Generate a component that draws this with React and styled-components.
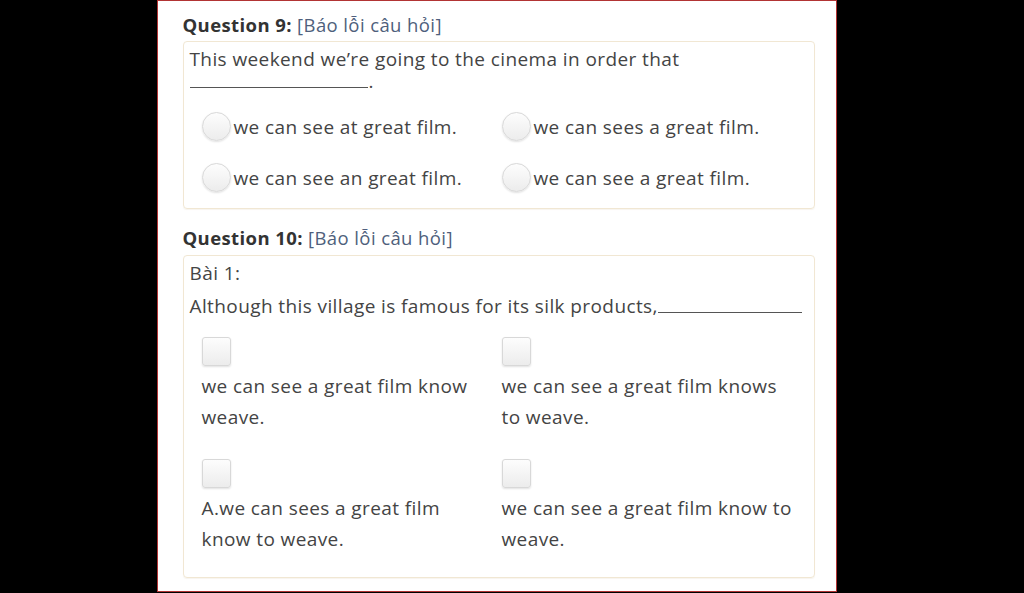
import React from 'react';
import styled, { createGlobalStyle } from 'styled-components';

const GlobalStyle = createGlobalStyle`
  html, body {
    margin: 0;
    padding: 0;
    background: #000;
  }
  body {
    font-family: "Open Sans", Lato, sans-serif;
    color: #444;
  }
`;

const Page = styled.div`
  width: 1024px;
  height: 593px;
  display: flex;
  padding-left: 157px;
  box-sizing: border-box;
  overflow: hidden;
`;

const Panel = styled.div`
  box-sizing: border-box;
  width: 680px;
  height: 592px;
  background: #fff;
  border: 1.5px solid #b23434;
  padding: 12px 21px 0 24.5px;
`;

const QuestionTitle = styled.div`
  font-size: 18.5px;
  line-height: 24px;
  letter-spacing: 0.4px;
  color: #333;
  margin-bottom: ${p => p.$mb || '4px'};

  b {
    font-weight: 700;
  }
`;

const ReportLink = styled.span`
  color: #4f5f7c;
`;

const Box = styled.div`
  border: 1px solid #f1e7d3;
  border-radius: 4px;
  padding: ${p => p.$pad};
  margin-bottom: ${p => p.$mb || '0'};
  box-shadow: 0 1px 1px rgba(200, 180, 150, 0.15);
`;

const Para = styled.div`
  font-size: 19px;
  line-height: ${p => p.$lh || '22px'};
  letter-spacing: 0.4px;
  white-space: nowrap;
  color: #444;
  margin-bottom: ${p => p.$mb || '0'};
`;

const Blank = styled.span`
  display: inline-block;
  width: ${p => p.$w}px;
  height: 1px;
  background: #555;
  vertical-align: baseline;
  margin-right: 1px;
`;

const RadioGrid = styled.div`
  display: grid;
  grid-template-columns: 300px 300px;
  row-gap: 22px;
  padding: 20px 0 0 12px;
`;

const RadioOption = styled.label`
  display: flex;
  align-items: center;
  font-size: 19px;
  letter-spacing: 0.4px;
  color: #444;
`;

const Radio = styled.span`
  box-sizing: border-box;
  width: 29px;
  height: 29px;
  border-radius: 50%;
  border: 1px solid #d8d8d8;
  background: linear-gradient(#fdfdfd, #ececec);
  box-shadow: 0 1px 2px rgba(0, 0, 0, 0.12);
  flex-shrink: 0;
  margin-right: 3px;
`;

const CheckGrid = styled.div`
  display: grid;
  grid-template-columns: 288px 296px;
  column-gap: 12px;
  row-gap: 26px;
  padding: 18px 0 0 12px;
`;

const CheckOption = styled.label`
  display: flex;
  flex-direction: column;
  align-items: flex-start;
  font-size: 19px;
  line-height: 31px;
  letter-spacing: 0.4px;
  color: #444;
`;

const Checkbox = styled.span`
  box-sizing: border-box;
  width: 29px;
  height: 29px;
  border-radius: 3px;
  border: 1px solid #d8d8d8;
  background: linear-gradient(#fdfdfd, #ececec);
  box-shadow: 0 1px 2px rgba(0, 0, 0, 0.12);
  margin-bottom: 5px;
`;

const q9Options = [
  'we can see at great film.',
  'we can sees a great film.',
  'we can see an great film.',
  'we can see a great film.',
];

const q10Options = [
  'we can see a great film know weave.',
  'we can see a great film knows to weave.',
  'A.we can sees a great film know to weave.',
  'we can see a great film know to weave.',
];

export default function App() {
  return (
    <Page>
      <GlobalStyle />
      <Panel>
        <QuestionTitle>
          <b>Question 9:</b> <ReportLink>[Báo lỗi câu hỏi]</ReportLink>
        </QuestionTitle>
        <Box $pad="6px 6px 16px 6px" $mb="17px">
          <Para>This weekend we’re going to the cinema in order that</Para>
          <Para>
            <Blank $w={178} />.
          </Para>
          <RadioGrid>
            {q9Options.map(o => (
              <RadioOption key={o}>
                <Radio />
                {o}
              </RadioOption>
            ))}
          </RadioGrid>
        </Box>

        <QuestionTitle $mb="5px">
          <b>Question 10:</b> <ReportLink>[Báo lỗi câu hỏi]</ReportLink>
        </QuestionTitle>
        <Box $pad="4px 6px 22px 6px">
          <Para $lh="26px" $mb="7px">Bài 1:</Para>
          <Para $lh="26px">
            Although this village is famous for its silk products,<Blank $w={144} />
          </Para>
          <CheckGrid>
            {q10Options.map(o => (
              <CheckOption key={o}>
                <Checkbox />
                {o}
              </CheckOption>
            ))}
          </CheckGrid>
        </Box>
      </Panel>
    </Page>
  );
}
